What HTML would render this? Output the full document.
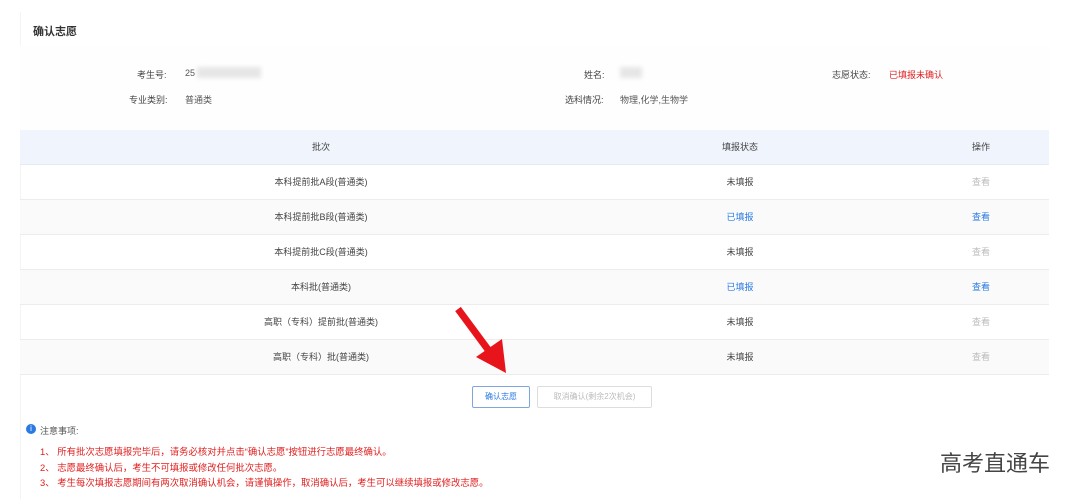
<!DOCTYPE html>
<html><head><meta charset="utf-8"><style>
body{margin:0;width:1080px;height:499px;background:#fff;font-family:"Liberation Sans","Noto Sans CJK SC",sans-serif;position:relative;overflow:hidden;font-size:9px;color:#444}
.abs{position:absolute;white-space:nowrap}
.panel{position:absolute;left:20px;top:12px;width:1030px;height:487px;background:#fff;border-left:1px solid #f4f4f4}
.row{position:absolute;left:20px;width:1029px;height:35px;border-bottom:1px solid #ececec;box-sizing:border-box}
.row span{position:absolute;top:0;line-height:35px;transform:translateX(-50%)}
.n{font-size:9.4px}
</style></head><body>
<div class="panel"></div>
<div class="abs" style="left:33px;top:23px;font-size:11px;font-weight:bold;color:#333">确认志愿</div>
<div style="position:absolute;left:20px;top:46px;width:1030px;height:84px;background:#fefefe"></div>
<div class="abs" style="left:137px;top:68px;color:#444">考生号:</div>
<div class="abs" style="left:185px;top:68px;color:#555">25</div>
<div class="abs" style="left:197px;top:67px;width:64px;height:11px;background:#e6e6e6;filter:blur(2px)"></div>
<div class="abs" style="left:129px;top:93px;color:#444">专业类别:</div>
<div class="abs" style="left:185px;top:93px;color:#555">普通类</div>
<div class="abs" style="left:584px;top:68px;color:#444">姓名:</div>
<div class="abs" style="left:620px;top:67px;width:22px;height:11px;background:#e6e6e6;filter:blur(2px)"></div>
<div class="abs" style="left:565px;top:93px;color:#444">选科情况:</div>
<div class="abs" style="left:620px;top:93px;color:#555">物理,化学,生物学</div>
<div class="abs" style="left:832px;top:68px;color:#444">志愿状态:</div>
<div class="abs" style="left:889px;top:68px;color:#e02020">已填报未确认</div>
<div class="row" style="top:130px;background:#f0f5fd;border-bottom:1px solid #e6ebf3"><span style="left:301px">批次</span><span style="left:720px">填报状态</span><span style="left:961px">操作</span></div>
<div class="row" style="top:165px"><span style="left:301px">本科提前批A段(普通类)</span><span style="left:720px">未填报</span><span style="left:961px;color:#bbb">查看</span></div>
<div class="row" style="top:200px;background:#fafafa"><span style="left:301px">本科提前批B段(普通类)</span><span style="left:720px;color:#2a7ae2">已填报</span><span style="left:961px;color:#2a7ae2">查看</span></div>
<div class="row" style="top:235px"><span style="left:301px">本科提前批C段(普通类)</span><span style="left:720px">未填报</span><span style="left:961px;color:#bbb">查看</span></div>
<div class="row" style="top:270px;background:#fafafa"><span style="left:301px">本科批(普通类)</span><span style="left:720px;color:#2a7ae2">已填报</span><span style="left:961px;color:#2a7ae2">查看</span></div>
<div class="row" style="top:305px"><span style="left:301px">高职（专科）提前批(普通类)</span><span style="left:720px">未填报</span><span style="left:961px;color:#bbb">查看</span></div>
<div class="row" style="top:340px;background:#fafafa"><span style="left:301px">高职（专科）批(普通类)</span><span style="left:720px">未填报</span><span style="left:961px;color:#bbb">查看</span></div>
<div class="abs" style="left:472px;top:386px;width:56px;height:20px;border:1px solid #7ea7e0;border-radius:2px;color:#2a7ae2;text-align:center;line-height:20px;font-size:8px">确认志愿</div>
<div class="abs" style="left:537px;top:386px;width:113px;height:20px;border:1px solid #ddd;border-radius:2px;color:#bbb;text-align:center;line-height:20px;font-size:8px">取消确认(剩余2次机会)</div>
<svg class="abs" style="left:450px;top:305px" width="62" height="70"><line x1="8" y1="4" x2="42" y2="50" stroke="#e8141c" stroke-width="7"/><polygon points="26,52 52,34 56,68" fill="#e8141c"/></svg>
<div class="abs" style="left:26px;top:424px;width:10px;height:10px;border-radius:50%;background:#2a7ae2;color:#fff;font-size:8px;line-height:10px;text-align:center">i</div>
<div class="abs" style="left:40px;top:424px;color:#555">注意事项:</div>
<div class="abs n" style="left:40px;top:444px;color:#e02020">1、 所有批次志愿填报完毕后，请务必核对并点击“确认志愿”按钮进行志愿最终确认。</div>
<div class="abs n" style="left:40px;top:460px;color:#e02020">2、 志愿最终确认后，考生不可填报或修改任何批次志愿。</div>
<div class="abs n" style="left:40px;top:475px;color:#e02020">3、 考生每次填报志愿期间有两次取消确认机会，请谨慎操作，取消确认后，考生可以继续填报或修改志愿。</div>
<div class="abs" style="left:940px;top:446px;font-size:22px;color:#444">高考直通车</div>
</body></html>
